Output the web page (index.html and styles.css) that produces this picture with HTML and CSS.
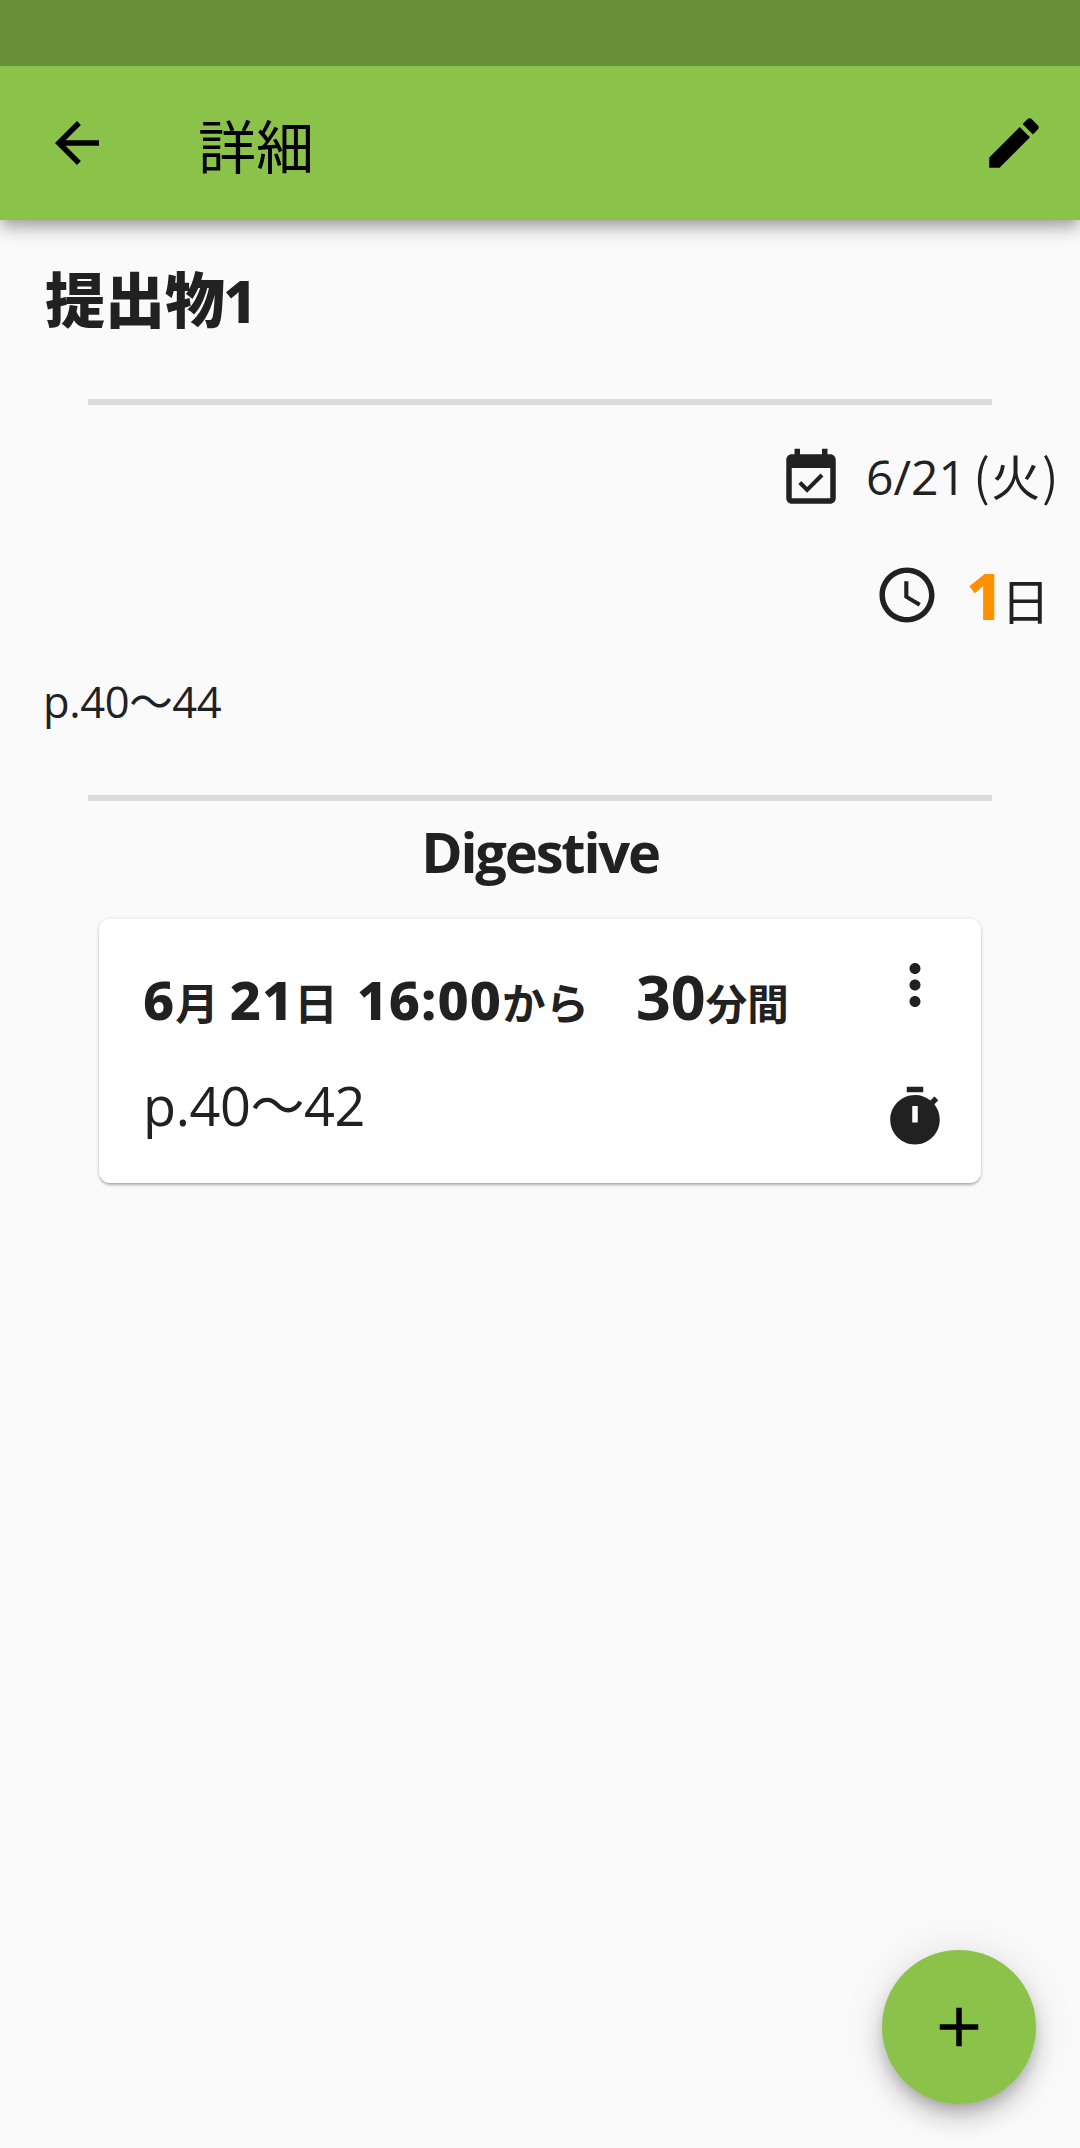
FILE: index.html
```html
<!DOCTYPE html>
<html lang="ja">
<head>
<meta charset="utf-8">
<title>詳細</title>
<link rel="stylesheet" href="styles.css">
</head>
<body>
<div class="status-bar"></div>
<header class="app-bar">
  <svg class="icon" viewBox="0 0 24 24"><path d="M20 11H7.83l5.59-5.59L12 4l-8 8 8 8 1.41-1.41L7.83 13H20v-2z"/></svg>
  <div class="app-title">詳細</div>
  <svg class="icon" viewBox="0 0 24 24"><path d="M3 17.25V21h3.75L17.81 9.94l-3.75-3.75L3 17.25zM20.71 7.04c.39-.39.39-1.02 0-1.41l-2.34-2.34c-.39-.39-1.02-.39-1.41 0l-1.83 1.83 3.75 3.75 1.83-1.83z"/></svg>
</header>
<main class="content">
  <h1 class="task-title">提出物<span class="task-number">1</span></h1>
  <div class="divider"></div>
  <div class="due-row">
    <svg class="icon" viewBox="0 0 24 24"><path d="M16.53 11.06L15.47 10l-4.88 4.88-2.12-2.12-1.06 1.06L10.59 17l5.94-5.94zM19 3h-1V1h-2v2H8V1H6v2H5c-1.11 0-1.99.9-1.99 2L3 19c0 1.1.89 2 2 2h14c1.1 0 2-.9 2-2V5c0-1.1-.9-2-2-2zm0 16H5V8h14v11z"/></svg>
    <div class="due-date"><span class="due-digits">6/21</span><span class="paren">(</span><span class="due-day">火</span><span class="paren">)</span></div>
  </div>
  <div class="remain-row">
    <svg class="icon" viewBox="0 0 24 24"><path d="M11.99 2C6.47 2 2 6.48 2 12s4.47 10 9.99 10C17.52 22 22 17.52 22 12S17.52 2 11.99 2zM12 20c-4.42 0-8-3.58-8-8s3.58-8 8-8 8 3.58 8 8-3.58 8-8 8zm.5-13H11v6l5.25 3.15.75-1.23-4.5-2.67z"/></svg>
    <div class="remain"><span class="remain-number">1</span><span class="remain-unit">日</span></div>
  </div>
  <p class="note">p.40〜44</p>
  <div class="divider divider-second"></div>
  <h2 class="section-title">Digestive</h2>
  <section class="card">
    <div class="card-text">
      <div class="schedule">
        <span class="num">6</span><span class="unit month">月</span><span class="num day">21</span><span class="unit day-unit">日</span><span class="num time">16:00</span><span class="unit from">から</span><span class="length">30</span><span class="minutes">分間</span>
      </div>
      <div class="card-note">p.40〜42</div>
    </div>
    <div class="card-actions">
      <svg class="icon" viewBox="0 0 24 24"><path d="M12 8c1.1 0 2-.9 2-2s-.9-2-2-2-2 .9-2 2 .9 2 2 2zm0 2c-1.1 0-2 .9-2 2s.9 2 2 2 2-.9 2-2-.9-2-2-2zm0 6c-1.1 0-2 .9-2 2s.9 2 2 2 2-.9 2-2-.9-2-2-2z"/></svg>
      <svg class="icon" viewBox="0 0 24 24"><path d="M9 1h6v2H9zM19.03 7.39l1.42-1.42c-.43-.51-.9-.99-1.41-1.41l-1.42 1.42C16.07 4.74 14.12 4 12 4c-4.97 0-9 4.03-9 9s4.02 9 9 9 9-4.03 9-9c0-2.12-.74-4.07-1.97-5.61zM13 14h-2V8h2v6z"/></svg>
    </div>
  </section>
</main>
<button class="fab" aria-label="追加"><svg class="icon" viewBox="0 0 24 24"><path d="M19 13h-6v6h-2v-6H5v-2h6V5h2v6h6v2z"/></svg></button>
</body>
</html>
```

FILE: styles.css
```css
* { box-sizing: border-box; }

body {
  margin: 0;
  min-height: 2148px;
  background: #fafafa;
  color: #212121;
  font-family: "Noto Sans", "Noto Sans CJK JP", sans-serif;
}

h1, h2, p { margin: 0; }

.icon {
  display: block;
  flex: none;
  width: 66px;
  height: 66px;
  fill: currentColor;
}

.status-bar { height: 66px; background: #689038; }

.app-bar {
  display: flex;
  align-items: center;
  height: 154px;
  padding: 0 33px 0 44px;
  background: #8bc34a;
  color: #000;
  box-shadow: 0 5.5px 11px -2.75px rgba(0, 0, 0, .2), 0 11px 14px rgba(0, 0, 0, .14), 0 3px 27px rgba(0, 0, 0, .12);
  clip-path: inset(0 0 -28px 0);
}

.app-title {
  flex: 1;
  padding: 8px 0 0 88px;
  font-size: 58px;
  line-height: 154px;
}

.content { padding-top: 29px; }

.task-title {
  padding-left: 45px;
  font-size: 60px;
  font-weight: 900;
  line-height: 102px;
  height: 100px;
}

.task-number { margin-left: -2px; font-size: 59px; font-weight: 800; }

.divider {
  height: 6px;
  margin: 50px 88px 0;
  background: #dbdbdb;
}

.divider-second { margin-top: 61px; }

.due-row, .remain-row {
  display: flex;
  justify-content: flex-end;
  height: 66px;
  line-height: 66px;
}

.due-row { margin-top: 41px; padding-right: 20px; }
.due-date { display: flex; width: 216px; margin-top: -2px; padding-left: 22px; font-size: 48px; white-space: nowrap; }
.due-digits { width: 114px; font-family: "Open Sans", sans-serif; font-weight: 370; }
.paren { width: 19px; font-family: "Noto Sans CJK JP", sans-serif; font-size: 50px; font-weight: 350; line-height: 60px; }
.due-day { width: 54px; font-size: 49px; }

.remain-row { margin-top: 50px; padding-right: 28px; }
.remain { display: flex; align-items: baseline; padding-left: 26px; }
.remain-number { width: 35px; color: #ff9100; font-size: 65px; font-weight: 800; }
.remain-unit { width: 51px; font-size: 49px; }

.note {
  margin-top: 40px;
  padding-left: 43px;
  font-family: "Open Sans", "Noto Sans CJK JP", sans-serif;
  font-size: 43.5px;
  font-weight: 370;
  letter-spacing: -.4px;
  line-height: 68px;
  height: 66px;
}

.section-title {
  margin-top: 16px;
  font-family: "Open Sans", sans-serif;
  font-size: 56px;
  font-weight: 750;
  font-stretch: 90%;
  letter-spacing: -2.2px;
  line-height: 68px;
  height: 66px;
  text-align: center;
}

.card {
  display: flex;
  justify-content: space-between;
  height: 264px;
  margin: 36px 99px 0;
  padding: 33px 33px 33px 44px;
  border-radius: 11px;
  background: #fff;
  box-shadow: 0 2.75px 2.75px -1px rgba(0, 0, 0, .2), 0 1px 3px rgba(0, 0, 0, .14), 0 1px 6px rgba(0, 0, 0, .08);
}

.card-text { display: flex; flex-direction: column; gap: 41px; padding-top: 12px; line-height: 66px; }
.schedule { display: flex; align-items: baseline; height: 66px; font-weight: 700; white-space: nowrap; }
.num { font-size: 54px; font-weight: 800; letter-spacing: 1px; }
.unit { font-size: 43.5px; }
.day { margin-left: 11px; }
.time { margin-left: 19px; }
.length { margin-left: 47px; font-size: 61px; }
.minutes { font-size: 41.5px; }
.card-note { font-family: "Open Sans", "Noto Sans CJK JP", sans-serif; font-size: 54px; font-weight: 370; letter-spacing: -.4px; line-height: 68px; }

.card-actions { display: flex; flex-direction: column; gap: 66px; }

.fab {
  position: fixed;
  right: 44px;
  bottom: 44px;
  display: grid;
  place-items: center;
  width: 154px;
  height: 154px;
  padding: 0;
  border: 0;
  border-radius: 50%;
  background: #8bc34a;
  color: #000;
  box-shadow: 0 8px 14px -3px rgba(0, 0, 0, .2), 0 16px 27px rgba(0, 0, 0, .14), 0 3px 44px rgba(0, 0, 0, .12);
}
```
